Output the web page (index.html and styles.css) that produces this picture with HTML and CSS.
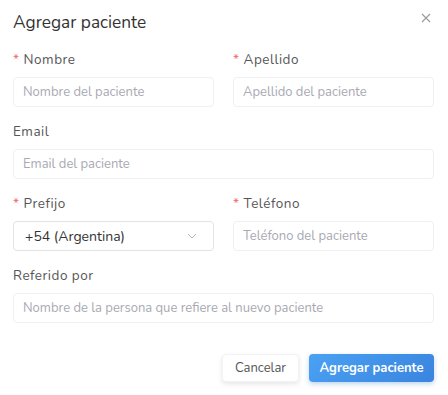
FILE: index.html
```html
<html>
<head>
<meta name="viewport" content="width=device-width, initial-scale=1">
<link rel="stylesheet" href="styles.css">
</head>
<body>
<div class="modal">
  <div class="modal_header">
    <h2 class="modal_title">Agregar paciente</h2>
    <span class="modal_close">
      <svg width="10" height="10" viewBox="0 0 10 10">
        <path d="M1 1 L9 9 M9 1 L1 9" stroke="#9a9a9a" stroke-width="1.1" fill="none" />
      </svg>
    </span>
  </div>

  <form class="form">
    <div class="row">
      <div class="field">
        <label class="label"><span class="req">*</span>Nombre</label>
        <input class="input" placeholder="Nombre del paciente">
      </div>
      <div class="field">
        <label class="label"><span class="req">*</span>Apellido</label>
        <input class="input" placeholder="Apellido del paciente">
      </div>
    </div>

    <div class="field">
      <label class="label">Email</label>
      <input class="input" placeholder="Email del paciente">
    </div>

    <div class="row">
      <div class="field">
        <label class="label"><span class="req">*</span>Prefijo</label>
        <div class="select">
          <span class="select_value">+54 (Argentina)</span>
          <svg width="10" height="6" viewBox="0 0 10 6">
            <path d="M1 1 L5 5 L9 1" stroke="#b5b5b5" stroke-width="1" fill="none" />
          </svg>
        </div>
      </div>
      <div class="field">
        <label class="label"><span class="req">*</span>Teléfono</label>
        <input class="input" placeholder="Teléfono del paciente">
      </div>
    </div>

    <div class="field">
      <label class="label">Referido por</label>
      <input class="input" placeholder="Nombre de la persona que refiere al nuevo paciente">
    </div>

    <div class="actions">
      <button type="button" class="btn btn_cancel">Cancelar</button>
      <button type="button" class="btn btn_primary">Agregar paciente</button>
    </div>
  </form>
</div>
</body>
</html>
```

FILE: styles.css
```css
body {
  margin: 0;
  background: #fff;
  font-family: "Nunito", Lato, "Open Sans", sans-serif;
}

.modal {
  width: 448px;
  height: 395px;
  padding: 0 14px 0 13px;
  box-sizing: border-box;
}

.modal_header {
  display: flex;
  justify-content: space-between;
  align-items: flex-start;
  padding-top: 12px;
}

.modal_title {
  margin: 0;
  font-size: 17.3px;
  font-weight: 400;
  line-height: 22px;
  color: #333;
}

.modal_close {
  display: flex;
  margin-top: 1px;
  margin-right: 3px;
}

.form {
  margin-top: 15px;
}

.row {
  display: flex;
  gap: 19px;
}

.row .field {
  flex: 1;
}

.field {
  display: flex;
  flex-direction: column;
  margin-bottom: 14px;
}

.label {
  font-size: 13.5px;
  line-height: 22px;
  color: #555;
  letter-spacing: 0.5px;
  margin-bottom: 6px;
}

.req {
  color: #f26b6b;
  margin-right: 4px;
}

.input {
  height: 30px;
  box-sizing: border-box;
  border: 1px solid #f0f0f0;
  border-radius: 4px;
  padding: 0 9px;
  font-family: inherit;
  font-size: 13px;
  color: #333;
  outline: none;
}

.input::placeholder {
  color: #a9a9b2;
}

.select {
  height: 30px;
  box-sizing: border-box;
  border: 1px solid #e3e3e3;
  border-radius: 4px;
  padding: 0 16px 0 11px;
  display: flex;
  align-items: center;
  justify-content: space-between;
}

.select_value {
  font-size: 14px;
  color: #333;
}

.actions {
  display: flex;
  justify-content: flex-end;
  gap: 10px;
  margin-top: 31px;
}

.btn {
  height: 28px;
  border-radius: 4px;
  font-family: inherit;
  font-size: 13px;
  cursor: pointer;
}

.btn_cancel {
  width: 77px;
  background: #fff;
  border: 1px solid #f3f3f3;
  color: #555;
  box-shadow: 0 2px 5px rgba(0, 0, 0, 0.1);
}

.btn_primary {
  width: 125px;
  border: none;
  color: #fff;
  font-weight: 700;
  background: linear-gradient(135deg, #4aa1f3, #3a84df);
  box-shadow: 0 2px 5px rgba(40, 110, 200, 0.3);
}
```
